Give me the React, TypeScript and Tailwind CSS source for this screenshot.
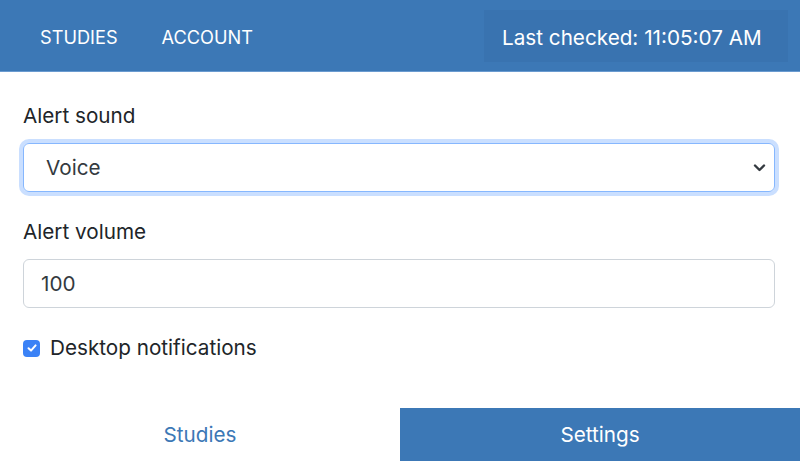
import React from "react";

export default function App() {
  const font = { fontFamily: 'Inter, "Liberation Sans", Arial, sans-serif' };
  return (
    <div className="w-[800px] h-[461px] flex flex-col bg-white overflow-hidden" style={font}>
      <header className="h-[72px] bg-[#3c78b6] flex items-center justify-between pl-[40px] pr-[12px] border-b border-[#6a9bd0]">
        <nav className="flex items-center gap-[44px] text-white text-[18.2px] pt-[4px]">
          <span>STUDIES</span>
          <span>ACCOUNT</span>
        </nav>
        <div className="h-[52px] w-[304px] bg-[#3973b0] flex items-center pl-[18px] pt-[4px] text-white text-[20.7px]">
          Last checked: 11:05:07 AM
        </div>
      </header>
      <main className="pl-[23px] pr-[25px] pt-[29px] text-[#212529]">
        <label className="block text-[20.7px] leading-[30px]">Alert sound</label>
        <div className="mt-[12px] relative h-[49px] rounded-[6px] border border-[#86b7fe] shadow-[0_0_0_4px_rgba(13,110,253,0.22)] flex items-center pl-[22px] text-[20.7px] text-[#343a40]">
          Voice
          <svg className="absolute right-[8px] top-[19px]" width="13" height="10" viewBox="0 0 13 10">
            <path d="M2 2.5 L6.5 7 L11 2.5" fill="none" stroke="#343a40" strokeWidth="2.4" strokeLinecap="round" strokeLinejoin="round" />
          </svg>
        </div>
        <label className="block mt-[25px] text-[20.7px] leading-[30px]">Alert volume</label>
        <div className="mt-[12px] h-[49px] rounded-[6px] border border-[#ced4da] flex items-center pl-[17px] text-[20.7px] text-[#343a40]">
          100
        </div>
        <div className="mt-[25px] flex items-center gap-[10px] h-[30px]">
          <div className="w-[17px] h-[17px] rounded-[4px] bg-[#3b82f6] flex items-center justify-center">
            <svg width="12" height="12" viewBox="0 0 12 12">
              <path d="M2.5 6.3 L5 8.6 L9.6 3.4" fill="none" stroke="white" strokeWidth="2" strokeLinecap="round" strokeLinejoin="round" />
            </svg>
          </div>
          <span className="text-[20.7px] text-[#212529]">Desktop notifications</span>
        </div>
      </main>
      <div className="mt-auto h-[53px] flex">
        <div className="flex-1 flex items-center justify-center text-[#3c78b6] text-[20.7px]">Studies</div>
        <div className="flex-1 flex items-center justify-center bg-[#3c78b6] text-white text-[20.7px]">Settings</div>
      </div>
    </div>
  );
}
